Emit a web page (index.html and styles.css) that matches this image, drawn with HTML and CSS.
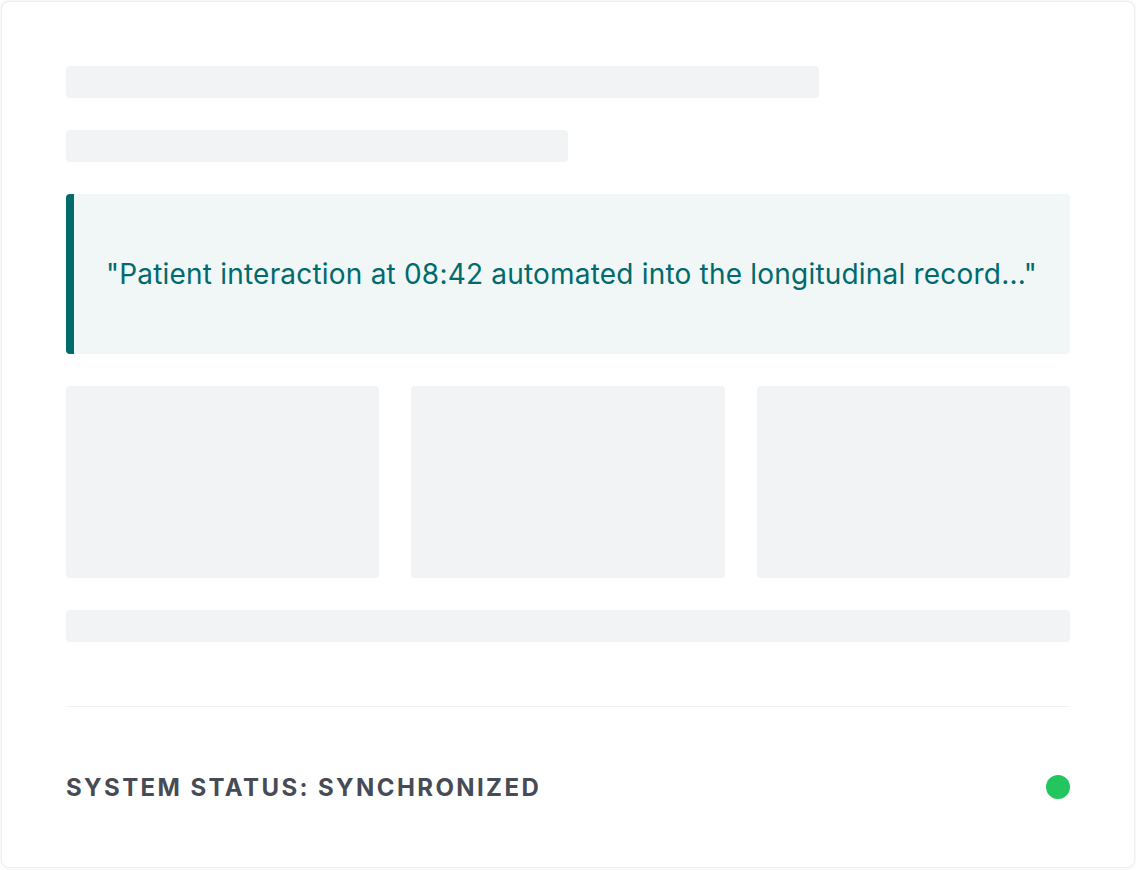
FILE: index.html
```html
<!DOCTYPE html>
<html lang="en">
<head>
    <meta charset="UTF-8">
    <meta name="viewport" content="width=device-width, initial-scale=1.0">
    <title>System Status</title>
    <link rel="stylesheet" href="styles.css">
</head>
<body>
    <div class="card">
        <div class="skeleton line wide"></div>
        <div class="skeleton line half"></div>

        <blockquote class="quote">
            "Patient interaction at 08:42 automated into the longitudinal record..."
        </blockquote>

        <div class="tile-row">
            <div class="skeleton tile"></div>
            <div class="skeleton tile"></div>
            <div class="skeleton tile"></div>
        </div>

        <div class="skeleton line"></div>

        <div class="status">
            <span class="status-label">System Status: Synchronized</span>
            <span class="status-dot"></span>
        </div>
    </div>
</body>
</html>
```

FILE: styles.css
```css
:root {
    --skeleton: #f2f3f5;
    --teal: #006a6c;
    --teal-bg: #f1f7f7;
    --label: #474b55;
}

html, body {
    height: 100%;
}

body {
    margin: 0;
    padding: 1px 1px 2px;
    box-sizing: border-box;
    background: #ffffff;
    font-family: 'Inter', 'Liberation Sans', sans-serif;
}

.card {
    box-sizing: border-box;
    height: 100%;
    padding: 64px;
    background: #ffffff;
    border: 1px solid #eceef0;
    border-radius: 8px;
    box-shadow: 0 0 4px rgba(0, 0, 0, 0.07);
    display: flex;
    flex-direction: column;
    gap: 32px;
}

.skeleton {
    background: var(--skeleton);
    border-radius: 4px;
}

.line {
    height: 32px;
}

.line.wide {
    width: 75%;
}

.line.half {
    width: 50%;
}

.quote {
    margin: 0;
    height: 160px;
    box-sizing: border-box;
    display: flex;
    align-items: center;
    padding: 0 32px;
    background: var(--teal-bg);
    border-left: 8px solid var(--teal);
    border-radius: 4px;
    color: var(--teal);
    font-size: 28px;
    line-height: 40px;
    letter-spacing: 0.2px;
}

.tile-row {
    display: grid;
    grid-template-columns: repeat(3, 1fr);
    gap: 32px;
}

.tile {
    height: 192px;
}

.status {
    margin-top: 32px;
    padding-top: 64px;
    border-top: 1px solid #f0f1f3;
    display: flex;
    align-items: center;
    justify-content: space-between;
    height: 32px;
}

.status-label {
    color: var(--label);
    font-size: 24px;
    font-weight: 700;
    letter-spacing: 0.1em;
    text-transform: uppercase;
}

.status-dot {
    width: 24px;
    height: 24px;
    border-radius: 50%;
    background: #22c55e;
}
```
